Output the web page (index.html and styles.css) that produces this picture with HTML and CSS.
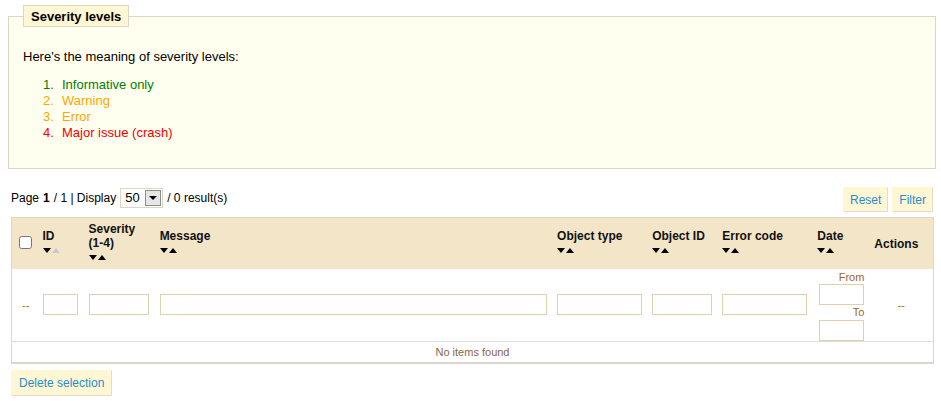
FILE: index.html
```html
<!DOCTYPE html>
<html lang="en">

<head>
    <meta charset="UTF-8">
    <meta name="viewport" content="width=device-width, initial-scale=1.0">
    <title>Log</title>
    <link rel="stylesheet" href="styles.css">
</head>

<body>
    <fieldset class="levels">
        <legend>Severity levels</legend>
        <p>Here's the meaning of severity levels:</p>
        <ol>
            <li class="lvl-1">Informative only</li>
            <li class="lvl-2">Warning</li>
            <li class="lvl-3">Error</li>
            <li class="lvl-4">Major issue (crash)</li>
        </ol>
    </fieldset>

    <div class="toolbar">
        <div class="pager">
            Page <b>1</b> / 1 | Display
            <span class="select">50<span class="select-btn"><i></i></span></span>
            / 0 result(s)
        </div>
        <div class="toolbar-btns">
            <button class="btn">Reset</button>
            <button class="btn">Filter</button>
        </div>
    </div>

    <table class="list">
        <thead>
            <tr>
                <th class="c-cb"><input type="checkbox"></th>
                <th class="c-id">ID<div class="sort"><span class="down"></span><span class="up off"></span></div></th>
                <th class="c-sev">Severity<br>(1-4)<div class="sort"><span class="down"></span><span class="up"></span></div></th>
                <th class="c-msg">Message<div class="sort"><span class="down"></span><span class="up"></span></div></th>
                <th class="c-ot">Object type<div class="sort"><span class="down"></span><span class="up"></span></div></th>
                <th class="c-oid">Object ID<div class="sort"><span class="down"></span><span class="up"></span></div></th>
                <th class="c-ec">Error code<div class="sort"><span class="down"></span><span class="up"></span></div></th>
                <th class="c-date">Date<div class="sort"><span class="down"></span><span class="up"></span></div></th>
                <th class="c-act">Actions</th>
            </tr>
        </thead>
        <tbody>
            <tr class="filter-row">
                <td class="dash">--</td>
                <td><input type="text" class="f-id"></td>
                <td><input type="text" class="f-sev"></td>
                <td><input type="text" class="f-msg"></td>
                <td><input type="text" class="f-ot"></td>
                <td><input type="text" class="f-oid"></td>
                <td><input type="text" class="f-ec"></td>
                <td class="date-cell">
                    <div class="date-lbl">From</div>
                    <input type="text" class="f-date">
                    <div class="date-lbl to">To</div>
                    <input type="text" class="f-date">
                </td>
                <td class="dash act">--</td>
            </tr>
            <tr class="empty-row">
                <td colspan="9">No items found</td>
            </tr>
        </tbody>
    </table>

    <button class="btn btn-delete">Delete selection</button>
</body>

</html>
```

FILE: styles.css
```css
* {
    margin: 0;
    padding: 0;
    box-sizing: border-box;
    font-family: "Liberation Sans", Arial, sans-serif;
}

body {
    font-size: 12px;
    color: #000;
    background-color: white;
    padding: 5px 6px 0 8px;
}

.levels {
    width: 928px;
    background-color: #fffff0;
    border: 1px solid #dfd5c3;
    padding: 22px 14px 27px 14px;
    font-size: 13px;
    line-height: 16px;
}

.levels legend {
    background-color: #fff6d3;
    border: 1px solid #dfd5c3;
    font-size: 13px;
    font-weight: bold;
    padding: 3px 7px 2px 7px;
    line-height: 15px;
}

.levels ol {
    margin-top: 12px;
    padding-left: 20px;
    list-style: none;
    counter-reset: lvl;
}

.levels li {
    counter-increment: lvl;
}

.levels li::before {
    content: counter(lvl) ".";
    display: inline-block;
    width: 19px;
}

.lvl-1 {
    color: #008000;
}

.lvl-2,
.lvl-3 {
    color: #ffa500;
}

.lvl-4 {
    color: #ee0000;
}

.toolbar {
    width: 922px;
    margin: 18px 0 0 3px;
    display: flex;
    justify-content: space-between;
    align-items: center;
}

.pager {
    display: flex;
    align-items: center;
    gap: 4px;
    margin-top: -4px;
}

.pager b {
    margin: 0 -4px;
    padding: 0 4px;
}

.select {
    display: inline-flex;
    align-items: center;
    justify-content: space-between;
    width: 43px;
    height: 20px;
    border: 1px solid #dfd5c3;
    padding: 0 1px 0 4px;
    font-size: 13px;
    background-color: white;
}

.select-btn {
    width: 16px;
    height: 16px;
    background-color: #e6e6e6;
    border: 1px solid #8c8c8c;
    display: flex;
    align-items: center;
    justify-content: center;
}

.select-btn i {
    border-left: 4px solid transparent;
    border-right: 4px solid transparent;
    border-top: 4px solid #000;
    margin-top: 1px;
}

.toolbar-btns {
    display: flex;
    gap: 4px;
}

.btn {
    background-color: #fff6d3;
    border: 1px solid #fff6d3;
    border-right-color: #e6dcc6;
    border-bottom-color: #e6dcc6;
    color: #268ccd;
    font-size: 12px;
    padding: 0 6px;
    height: 25px;
    cursor: pointer;
}

.list {
    margin: 5px 0 0 3px;
    width: 923px;
    border-collapse: collapse;
    table-layout: fixed;
    border: 1px solid #dfd5c3;
    border-bottom: 2px solid #dcd6cb;
}

.list th {
    background-color: #f3e5c8;
    height: 51px;
    text-align: left;
    vertical-align: middle;
    padding: 1px 5px 0 5px;
    font-weight: bold;
    line-height: 14px;
    color: #111;
}

.sort {
    display: flex;
    align-items: center;
    gap: 1px;
    height: 16px;
}

.sort span {
    width: 0;
    height: 0;
    border-left: 4px solid transparent;
    border-right: 4px solid transparent;
}

.sort .down {
    border-top: 5px solid #000;
}

.sort .up {
    border-bottom: 5px solid #000;
}

.sort .up.off {
    border-bottom-color: #c8c8c8;
}

.c-cb {
    width: 26px;
}

.c-cb input {
    width: 13px;
    height: 13px;
    margin: 0 0 0 2px;
}

.c-id {
    width: 46px;
}

.c-sev {
    width: 71px;
}

.c-msg {
    width: 397px;
}

.c-ot {
    width: 95px;
}

.c-oid {
    width: 70px;
}

.c-ec {
    width: 95px;
}

.c-date {
    width: 57px;
}

.list th.c-act {
    width: 64px;
}

.filter-row td {
    padding: 0 5px;
    vertical-align: middle;
    border-bottom: 1px solid #dddddd;
    height: 71px;
}

.filter-row input {
    display: block;
    height: 21px;
    border: 1px solid #e0d0ae;
    background-color: white;
}

.f-id {
    width: 35px;
}

.f-sev {
    width: 60px;
}

.f-msg {
    width: 387px;
}

.f-ot,
.f-ec {
    width: 85px;
}

.f-oid {
    width: 60px;
}

.filter-row .date-cell {
    text-align: right;
    padding-top: 1px;
}

.date-cell .f-date {
    width: 45px;
    margin-left: auto;
}

.date-lbl {
    font-size: 11px;
    line-height: 14px;
    color: #996633;
}

.date-lbl.to {
    line-height: 15px;
}

.dash {
    color: #b36b00;
    font-size: 11px;
}

.filter-row .dash {
    padding-left: 10px;
}

.filter-row .act {
    text-align: center;
    padding-left: 5px;
}

.empty-row td {
    height: 22px;
    text-align: center;
    font-size: 11px;
    color: #886644;
}

.btn-delete {
    margin: 6px 0 0 3px;
    height: 26px;
    padding: 0 7px;
}
```
